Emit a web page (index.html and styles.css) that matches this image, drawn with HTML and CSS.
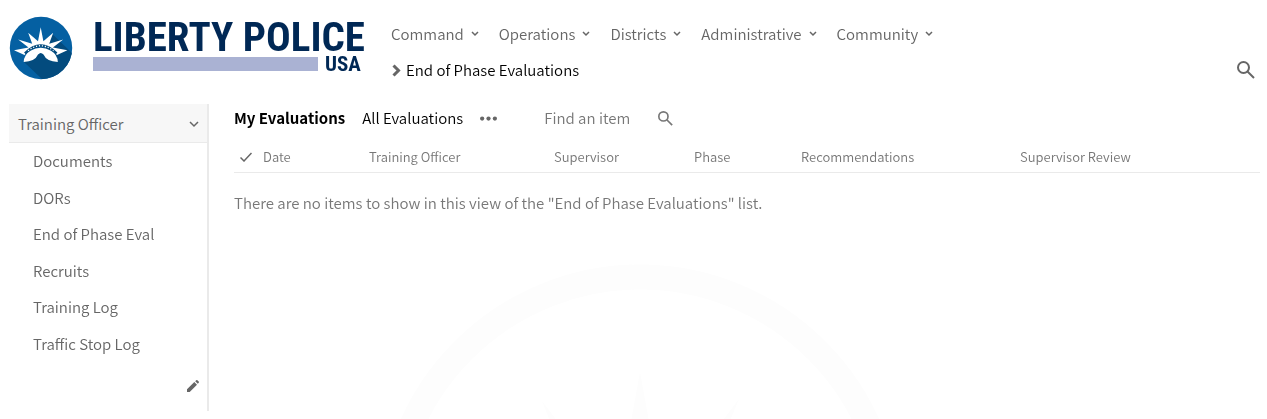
FILE: index.html
```html
<!DOCTYPE html>
<html lang="en">
<head>
<meta charset="utf-8">
<title>End of Phase Evaluations</title>
<link rel="stylesheet" href="styles.css">
</head>
<body>
<svg class="watermark" viewBox="0 0 526 526" aria-hidden="true">
  <circle cx="263" cy="263" r="250" fill="none" stroke="#fdfdfd" stroke-width="25"/>
  <path d="M263 108l20 110h-40zM165 137l68 90-26 14zM362 135l-70 92 26 14z" fill="#fdfdfd"/>
</svg>
<header class="header">
  <a class="logo" href="#">
    <svg class="emblem" viewBox="0 0 64 64" aria-hidden="true">
      <defs><clipPath id="disc"><circle cx="32" cy="32" r="31.2"/></clipPath></defs>
      <circle cx="32" cy="32" r="31.2" fill="#0560a2"/>
      <path clip-path="url(#disc)" d="M43.300 18L64 38V64H34L14.700 45.700L30 38L38 28z" fill="#034b7e"/>
      <path d="M5 34.200L19.500 31.500L9.200 23.400L23.200 27.700L19.200 16.700L29 25.300L31.700 11.300L34.400 25.300L44.200 16.700L40.200 27.700L54.200 23.400L43.900 31.500L58.400 34.200L48 39L42 33L31.700 30L21.500 33L15.500 39z" fill="#fff"/>
      <path d="M16 37.500Q31.700 22 47.500 37.500" fill="none" stroke="#034b7e" stroke-width="2.600"/>
      <path d="M19 34.700Q31.700 24.800 44.500 34.700" fill="none" stroke="#fff" stroke-width="1.300" stroke-dasharray="1.200 1.800"/>
      <path d="M14.700 46Q15 38.500 21.500 34.700Q31.700 29 42 34.700Q48.500 38.500 48.800 46Q37.500 45.500 34.500 38.500Q31.700 35.500 29 38.500Q26 45.500 14.700 46z" fill="#fff"/>
    </svg>
    <span class="wordmark">
      <span class="wordmark-name">LIBERTY POLICE</span>
      <span class="wordmark-base"><span class="wordmark-bar"></span><span>USA</span></span>
    </span>
  </a>
  <div class="header-main">
    <nav class="topnav" aria-label="Main">
      <a href="#">Command <svg class="caret" viewBox="0 0 8 6"><path d="M1 1l3 3 3-3"/></svg></a>
      <a href="#">Operations <svg class="caret" viewBox="0 0 8 6"><path d="M1 1l3 3 3-3"/></svg></a>
      <a href="#">Districts <svg class="caret" viewBox="0 0 8 6"><path d="M1 1l3 3 3-3"/></svg></a>
      <a href="#">Administrative <svg class="caret" viewBox="0 0 8 6"><path d="M1 1l3 3 3-3"/></svg></a>
      <a href="#">Community <svg class="caret" viewBox="0 0 8 6"><path d="M1 1l3 3 3-3"/></svg></a>
    </nav>
    <div class="title-row">
      <svg class="crumb" viewBox="0 0 9 13" aria-hidden="true"><path d="M1.500 1.500l5 5-5 5"/></svg>
      <a class="page-title" href="#">End of Phase Evaluations</a>
      <button class="icon-button" type="button" aria-label="Search"><svg class="search-large" viewBox="0 0 18 18"><circle cx="6.500" cy="6.500" r="5.500"/><path d="M10.500 10.500l6.500 6.500"/></svg></button>
    </div>
  </div>
</header>
<div class="content">
  <nav class="sidebar" aria-label="Section">
    <button class="side-head" type="button">Training Officer <svg class="side-caret" viewBox="0 0 10 7"><path d="M1 1l4 4 4-4"/></svg></button>
    <ul class="side-list">
      <li><a href="#">Documents</a></li>
      <li><a href="#">DORs</a></li>
      <li><a href="#">End of Phase Eval</a></li>
      <li><a href="#">Recruits</a></li>
      <li><a href="#">Training Log</a></li>
      <li><a href="#">Traffic Stop Log</a></li>
    </ul>
    <button class="icon-button edit" type="button" aria-label="Edit links"><svg class="pencil" viewBox="0 0 12 12"><path d="M0 9.300L7.300 2L10 4.700L2.700 12H0zM8.200 1.200L9.200.300Q9.800-.200 10.400.300L11.700 1.600Q12.200 2.200 11.700 2.800L10.800 3.800z"/></svg></button>
  </nav>
  <main class="list">
    <div class="toolbar">
      <a class="view current" href="#">My Evaluations</a>
      <a class="view" href="#">All Evaluations</a>
      <button class="icon-button more" type="button" aria-label="More views"><svg class="dots" viewBox="0 0 16 4"><circle cx="2" cy="2" r="2"/><circle cx="8" cy="2" r="2"/><circle cx="14" cy="2" r="2"/></svg></button>
      <input class="find" type="text" placeholder="Find an item" aria-label="Find an item">
      <button class="icon-button" type="button" aria-label="Find"><svg class="search-small" viewBox="0 0 18 18"><circle cx="6.500" cy="6.500" r="5.500"/><path d="M10.500 10.500l6.500 6.500"/></svg></button>
    </div>
    <table class="grid">
      <colgroup><col class="c-check"><col class="c-date"><col class="c-officer"><col class="c-supervisor"><col class="c-phase"><col class="c-rec"><col></colgroup>
      <thead>
        <tr>
          <th scope="col" aria-label="Select"><svg class="tick" viewBox="0 0 12 10"><path d="M.500 5.500l3.500 3.500L11.500 1"/></svg></th>
          <th scope="col">Date</th>
          <th scope="col">Training Officer</th>
          <th scope="col">Supervisor</th>
          <th scope="col">Phase</th>
          <th scope="col">Recommendations</th>
          <th scope="col">Supervisor Review</th>
        </tr>
      </thead>
    </table>
    <p class="empty">There are no items to show in this view of the "End of Phase Evaluations" list.</p>
  </main>
</div>
</body>
</html>
```
FILE: styles.css
```css
* { box-sizing: border-box; }

body {
  margin: 0;
  background: #fff;
  color: #666;
  font-family: "Source Sans Pro", "Noto Sans CJK SC", sans-serif;
  font-size: 15px;
  font-weight: 350;
  line-height: 20px;
  overflow: hidden;
}

a { color: inherit; text-decoration: none; }

svg { flex: none; display: block; fill: none; stroke: #666; }

.watermark {
  position: fixed;
  z-index: -1;
  top: 264px;
  left: calc(50% - 257px);
  width: 526px;
  height: 526px;
  stroke: none;
}

.icon-button { display: flex; padding: 0; border: 0; background: none; }

.header { display: flex; padding: 16px 12px 0 9px; height: 104px; }

.logo { display: flex; align-items: flex-start; gap: 20px; width: 382px; }
.emblem { width: 64px; height: 64px; stroke: none; }

.wordmark {
  display: flex;
  flex-direction: column;
  width: 271px;
  padding-top: 1px;
  color: #002855;
  font-family: "Roboto Condensed", "Liberation Sans Narrow", Roboto, sans-serif;
  font-weight: 700;
}
.wordmark-name { font-size: 41px; line-height: 40px; white-space: nowrap; }
.wordmark-base { display: flex; align-items: flex-start; gap: 7px; font-size: 21px; line-height: 14px; }
.wordmark-bar { width: 225px; height: 14px; background: #aab2d3; }

.header-main { flex: 1; padding-top: 8px; }
.topnav { display: flex; gap: 20px; }
.topnav a { display: flex; align-items: center; gap: 7px; }
.caret { width: 8px; height: 6px; stroke-width: 1.500; }

.title-row { display: flex; align-items: center; margin-top: 16px; color: #000; }
.crumb { width: 9px; height: 13px; margin: 0 5px 0 1px; stroke-width: 3; }
.page-title { flex: 1; }
.search-large { width: 18px; height: 18px; stroke-width: 2; }

.content { display: flex; padding: 0 7px 0 9px; gap: 25px; }

.sidebar { width: 200px; height: 307px; border-right: 2px solid #eaeaea; }
.side-head {
  display: flex;
  align-items: center;
  justify-content: space-between;
  width: 100%;
  height: 39px;
  padding: 2px 8px 0 9px;
  border: 0;
  border-bottom: 1px solid #eaeaea;
  background: #f7f7f7;
  color: inherit;
  font: inherit;
}
.side-caret { width: 10px; height: 7px; stroke-width: 1.500; }
.side-list { display: flex; flex-direction: column; justify-content: space-between; height: 203px; margin: 8px 0 0; padding: 0 0 0 24px; list-style: none; }
.side-list a { display: block; }
.edit { margin: 26px 8px 0 auto; }
.pencil { width: 12px; height: 12px; fill: #666; stroke: none; }

.list { flex: 1; }
.toolbar { display: flex; align-items: center; height: 28px; color: #000; }
.view { margin-right: 17px; }
.current { font-weight: 700; }
.more { margin-right: 47px; }
.dots { width: 17px; height: 5px; fill: #666; stroke: none; }
.find { width: 114px; padding: 0; border: 0; outline: 0; background: none; color: #777; font: inherit; }
.find::placeholder { color: #777; opacity: 1; }
.search-small { width: 15px; height: 15px; stroke: #777; stroke-width: 2; }

.grid { width: 100%; border-collapse: collapse; table-layout: fixed; }
.grid th {
  height: 40px;
  padding: 11px 0 0;
  border-bottom: 1px solid #eaeaea;
  color: #777;
  font-size: 13px;
  font-weight: inherit;
  text-align: left;
  white-space: nowrap;
}
.c-check { width: 29px; }
.c-date { width: 106px; }
.c-officer { width: 185px; }
.c-supervisor { width: 140px; }
.c-phase { width: 107px; }
.c-rec { width: 219px; }
.tick { width: 12px; height: 10px; margin-left: 6px; stroke-width: 1.500; }

.empty { margin: 20px 0 0; color: #777; }
```
